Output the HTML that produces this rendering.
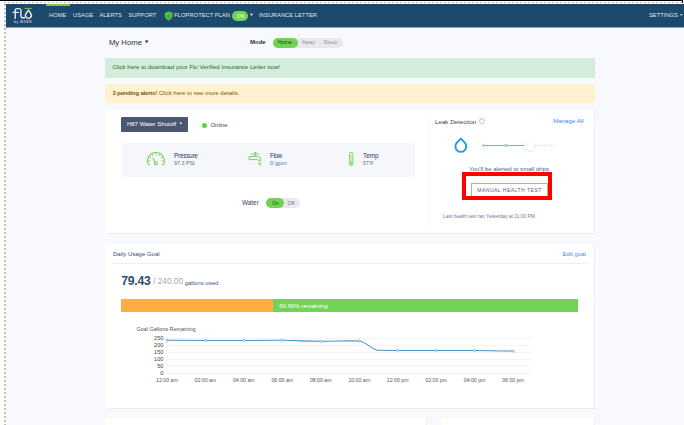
<!DOCTYPE html>
<html><head><meta charset="utf-8">
<style>
*{margin:0;padding:0;box-sizing:border-box}
html,body{width:684px;height:425px;overflow:hidden;background:#fff}
body{position:relative;font-family:"Liberation Sans",sans-serif;color:#333}
.a{position:absolute;white-space:nowrap}
#topblack{left:0;top:0;width:683px;height:1px;background:#000}
#topblack2{left:682px;top:0;width:1px;height:3px;background:#000}
#dotrow{left:4px;top:2px;width:678px;height:1px;background:repeating-linear-gradient(90deg,#bdbdbd 0 2px,transparent 2px 4px)}
#dotcol{left:4px;top:4px;width:2px;height:421px;background:repeating-linear-gradient(180deg,#bdbdbd 0 2px,transparent 2px 4px)}
#page{left:6px;top:4px;width:678px;height:421px;background:#f7f9fc}
#nav{left:6px;top:4px;width:678px;height:23px;background:#1d496d;box-shadow:0 1px 0 #8aa1b4}
.nt{color:#dfe6ee;font-size:5.8px;top:12.4px;line-height:6px}
.card{background:#fff;box-shadow:0.5px 0.6px 1px rgba(40,40,60,0.05)}
.t{line-height:1}
</style></head><body>
<div id="page" class="a"></div>
<div id="topblack" class="a"></div>
<div id="topblack2" class="a"></div>
<div id="dotrow" class="a"></div>
<div id="dotcol" class="a"></div>
<div id="nav" class="a"></div>
<div class="a" style="left:46px;top:4px;width:24px;height:2px;background:#72c94e"></div>
<!-- logo -->
<svg class="a" style="left:10px;top:5px" width="26" height="20" viewBox="0 0 26 20">
 <g fill="none" stroke="#eef2f6" stroke-width="1.35" stroke-linecap="round">
  <path d="M5.2 13.4 V5.6 Q5.2 3.6 7.4 3.6 H9.8"/>
  <path d="M3.2 7.3 H8.4"/>
  <path d="M10.9 4.5 V10.8 Q10.9 12.7 12.8 12.7 H14.6"/>
  <path d="M18.4 5.2 L20.81 8.59 A2.95 2.95 0 1 1 15.99 8.59 Z" stroke-linejoin="round"/>
 </g>
 <rect x="14.6" y="2.9" width="7.1" height="1.1" fill="#6cc04a"/>
 <text x="4" y="18.3" font-size="3" font-weight="bold" fill="#c4ced8" font-family="Liberation Sans" letter-spacing="0.68">by MOEN</text>
</svg>

<div class="a nt" style="left:49px">HOME</div>
<div class="a nt" style="left:73px">USAGE</div>
<div class="a nt" style="left:99.5px">ALERTS</div>
<div class="a nt" style="left:128.4px">SUPPORT</div>
<svg class="a" style="left:164px;top:10.5px" width="9.5" height="10" viewBox="0 0 9.5 10">
 <path d="M4.7 0.4 L8.7 1.8 L8.5 5.6 Q8 8.2 4.7 9.6 Q1.4 8.2 0.9 5.6 L0.7 1.8 Z" fill="#54bf42"/>
 <path d="M4.7 2.6 L3.2 5.2 A1.7 1.7 0 1 0 6.2 5.2 Z" fill="#3f9a33" opacity="0.6"/>
</svg>
<div class="a nt" style="left:174.3px">FLOPROTECT PLAN</div>
<div class="a" style="left:232px;top:11.3px;width:16.2px;height:9.4px;border-radius:5px;background:#6fd452"></div>
<div class="a nt" style="left:236.8px;top:13.2px;font-size:5px;color:#fff">ON</div>
<svg class="a" style="left:0;top:0" width="684" height="425" viewBox="0 0 684 425"><polygon points="249.9,13.7 253.20000000000002,13.7 251.55,15.899999999999999" fill="#e6ecf2"/></svg>
<div class="a nt" style="left:259px">INSURANCE LETTER</div>
<div class="a nt" style="left:649px">SETTINGS</div>
<svg class="a" style="left:0;top:0" width="684" height="425" viewBox="0 0 684 425"><polygon points="679.9,14.2 682.6999999999999,14.2 681.3,15.799999999999999" fill="#e6ecf2"/></svg>

<!-- header row -->
<div class="a t" style="left:108.9px;top:38.7px;font-size:7.75px;color:#2e2e36">My Home</div>
<svg class="a" style="left:0;top:0" width="684" height="425" viewBox="0 0 684 425"><polygon points="144.9,40.6 148.5,40.6 146.70000000000002,43.2" fill="#2e2e36"/></svg>
<div class="a t" style="left:250px;top:39.4px;font-size:6px;font-weight:bold;color:#2c2f3a">Mode</div>
<div class="a" style="left:272.6px;top:38px;width:70.3px;height:9.6px;border-radius:5px;background:#e8e9ec"></div>
<div class="a" style="left:272.6px;top:38px;width:25.6px;height:9.6px;border-radius:5px;background:#6fd452"></div>
<div class="a t" style="left:277.8px;top:40px;font-size:5.3px;color:#1f3b2a">Home</div>
<div class="a t" style="left:302px;top:40px;font-size:5.3px;color:#8e93a0">Away</div>
<div class="a t" style="left:323.6px;top:40px;font-size:5.3px;color:#9a9490">Sleep</div>

<!-- alerts -->
<div class="a" style="left:104.5px;top:57.5px;width:490.5px;height:20.2px;background:#d4eddb;border-radius:2px"></div>
<div class="a t" style="left:112.4px;top:63.9px;font-size:6.1px;color:#2a6b3a">Click here to download your Flo Verified Insurance Letter now!</div>
<div class="a" style="left:104.5px;top:83.5px;width:490.5px;height:19.8px;background:#fff2cf;border-radius:2px"></div>
<div class="a t" style="left:112.4px;top:90px;font-size:6px;color:#735b1a"><b style="letter-spacing:-0.2px">3 pending alerts!</b> Click here to see more details.</div>

<!-- card 1 -->
<div class="a card" style="left:105px;top:110px;width:489px;height:123px"></div>
<div class="a" style="left:121.2px;top:117px;width:66.8px;height:15px;background:#4b5670;border-radius:1px"></div>
<div class="a t" style="left:126.9px;top:121.2px;font-size:6.05px;color:#fff">H87 Water Shutoff</div>
<svg class="a" style="left:0;top:0" width="684" height="425" viewBox="0 0 684 425"><polygon points="179.4,122.4 182.3,122.4 180.85,124.4" fill="#fff"/></svg>
<div class="a" style="left:201.5px;top:123.1px;width:5px;height:5px;border-radius:50%;background:#62cf45"></div>
<div class="a t" style="left:210.5px;top:123px;font-size:5.95px;color:#3a4356">Online</div>

<div class="a" style="left:121.5px;top:142.5px;width:293.5px;height:34.8px;background:#f5f7fb"></div>
<!-- gauge -->
<svg class="a" style="left:144px;top:149px" width="24" height="19" viewBox="144 149 24 19">
 <g fill="none" stroke="#78d25a" stroke-width="1.05" stroke-linecap="round">
  <path d="M149.56 164.45 L148.26 164.45 A8.45 8.45 0 1 1 163.64 164.45 L162.34 164.45"/>
  <path d="M162.05 160.95 L163.55 160.95 M161.23 157.90 L162.53 157.15 M159.00 155.67 L159.75 154.37 M155.95 154.85 L155.95 153.35 M152.90 155.67 L152.15 154.37 M150.67 157.90 L149.37 157.15 M149.85 160.95 L148.35 160.95" stroke-width="0.9"/>
  <path d="M152.9 158.3 L155.2 162"/>
  <circle cx="155.9" cy="163.3" r="1.55"/>
 </g>
</svg>
<div class="a t" style="left:174px;top:152.5px;font-size:6.3px;letter-spacing:-0.2px;color:#223c5e">Pressure</div>
<div class="a t" style="left:174px;top:160.8px;font-size:5.45px;color:#5d6d82">97.3 PSI</div>
<!-- faucet -->
<svg class="a" style="left:246px;top:150px" width="18" height="18" viewBox="246 150 18 18">
 <g fill="none" stroke="#78d25a" stroke-width="1" stroke-linecap="round" stroke-linejoin="round">
  <path d="M251.4 154.2 H258.8 M254.3 152.7 H256.1 M255.2 152.7 V156.6"/>
  <path d="M249.5 156.6 H257.6 Q260.9 156.6 260.9 160 V161 H258.5 V160.3 Q258.5 159.6 257.7 159.6 H249.5 Z"/>
  <circle cx="259.6" cy="163.8" r="1.05"/>
 </g>
</svg>
<div class="a t" style="left:270px;top:152.5px;font-size:6.3px;letter-spacing:-0.4px;color:#223c5e">Flow</div>
<div class="a t" style="left:270px;top:160.4px;font-size:6px;color:#4f79a8">0 gpm</div>
<!-- thermometer -->
<svg class="a" style="left:344px;top:149px" width="16" height="19" viewBox="344 149 16 19">
 <path d="M351.2 154.2 V161.8" stroke="#c2dc6a" stroke-width="1"/>
 <g fill="none" stroke="#78d25a" stroke-width="0.95">
  <path d="M349.5 161.6 V154.1 A1.7 1.7 0 0 1 352.9 154.1 V161.6"/>
  <circle cx="351.2" cy="163.5" r="2.05"/>
 </g>
 <circle cx="351.2" cy="163.5" r="1.1" fill="#6fcd4c"/>
</svg>
<div class="a t" style="left:363px;top:152.5px;font-size:6.3px;color:#223c5e">Temp</div>
<div class="a t" style="left:363px;top:160.6px;font-size:5px;color:#5d6d82">57°F</div>

<div class="a t" style="left:242px;top:200px;font-size:6.4px;color:#2d4766">Water</div>
<div class="a" style="left:265.8px;top:198.2px;width:34.2px;height:9.8px;border-radius:5px;background:#e8e9ec"></div>
<div class="a" style="left:265.8px;top:198.2px;width:18.2px;height:9.8px;border-radius:5px;background:#6fd452"></div>
<div class="a t" style="left:272px;top:200.5px;font-size:5.2px;color:#1f3b2a">On</div>
<div class="a t" style="left:287.5px;top:200.5px;font-size:5.2px;color:#6c707a">Off</div>

<div class="a" style="left:428px;top:117px;width:1px;height:108.5px;background:#f4f5f8"></div>

<div class="a t" style="left:435px;top:118.7px;font-size:6.2px;color:#3a3f56">Leak Detection</div>
<div class="a" style="left:479px;top:118.4px;width:5.6px;height:5.6px;border-radius:50%;border:0.6px solid #c3c7cf;font-size:4px;color:#bbb;text-align:center;line-height:4.6px">?</div>
<div class="a t" style="left:553px;top:118.4px;font-size:6.2px;color:#478bf0">Manage All</div>
<svg class="a" style="left:453px;top:136px" width="16" height="18" viewBox="0 0 16 18">
 <path d="M7.85 2.7 L11.77 6.67 A5.45 5.45 0 1 1 3.93 6.67 Z" fill="none" stroke="#1e9be6" stroke-width="1.9" stroke-linejoin="round"/>
</svg>
<div class="a" style="left:483.7px;top:144.5px;width:41px;height:1.4px;background:#6cd24a"></div>
<div class="a" style="left:524.5px;top:144.6px;width:26.5px;height:1.2px;background:#e9eaec"></div>
<div class="a" style="left:482px;top:143.5px;width:3.4px;height:3.4px;border-radius:50%;border:0.8px solid #70d24f;background:#fff"></div>
<div class="a" style="left:504.2px;top:143.5px;width:3.4px;height:3.4px;border-radius:50%;border:0.8px solid #70d24f;background:#fff"></div>
<div class="a" style="left:549.3px;top:143.5px;width:3.4px;height:3.4px;border-radius:50%;border:0.8px solid #e6e7ea;background:#fff"></div>
<div class="a" style="left:523.8px;top:139.6px;width:11px;height:11px;border-radius:50%;background:#fff;box-shadow:0 0.4px 1.4px rgba(0,0,0,0.22)"></div>

<div class="a t" style="left:469.1px;top:166.2px;font-size:6.05px;color:#48628c">You'll be alerted to small drips</div>
<div class="a" style="left:471.4px;top:182.8px;width:77px;height:14px;border:0.8px solid #86d56c;background:#fff"></div>
<div class="a t" style="left:477.3px;top:187.9px;font-size:5px;color:#4f5f7a;letter-spacing:0.5px">MANUAL HEALTH TEST</div>
<div class="a" style="left:461.9px;top:172px;width:90.6px;height:27.6px;border:4.2px solid #fe0000"></div>
<div class="a t" style="left:443px;top:215.3px;font-size:4.9px;color:#6b7994">Last health test ran Yesterday at 11:00 PM</div>

<!-- card 2 -->
<div class="a card" style="left:105px;top:243.6px;width:489px;height:164.4px"></div>
<div class="a t" style="left:112.9px;top:250.7px;font-size:6.0px;color:#34507a">Daily Usage Goal</div>
<div class="a t" style="left:562.6px;top:250.7px;font-size:6.0px;color:#3f87ee">Edit goal</div>
<div class="a" style="left:112.9px;top:263.2px;width:473px;height:1px;background:#eceef2"></div>
<div class="a t" style="left:121.2px;top:275.3px;font-size:12.2px;font-weight:bold;color:#2f4c6e;letter-spacing:-0.25px">79.43</div>
<div class="a t" style="left:153.2px;top:278.2px;font-size:8.25px;color:#a3a8b2">/ 240.00</div>
<div class="a t" style="left:184.7px;top:279.8px;font-size:6px;color:#3e5a80">gallons used</div>

<div class="a" style="left:121.2px;top:299.4px;width:456.4px;height:12.3px;background:#73d356"></div>
<div class="a" style="left:121.2px;top:299.4px;width:151.4px;height:12.3px;background:#fead42"></div>
<div class="a t" style="left:279.3px;top:302.5px;font-size:6px;color:#fff">66.90% remaining</div>

<div class="a t" style="left:136.6px;top:327px;font-size:5.45px;color:#555">Goal Gallons Remaining</div>
<svg class="a" style="left:130px;top:332px" width="410" height="56" viewBox="130 332 410 56">
 <g stroke="#e8e8e8" stroke-width="0.6">
  <line x1="166.9" y1="338.3" x2="531.5" y2="338.3"/>
  <line x1="166.9" y1="345.3" x2="531.5" y2="345.3"/>
  <line x1="166.9" y1="352.3" x2="531.5" y2="352.3"/>
  <line x1="166.9" y1="359.3" x2="531.5" y2="359.3"/>
  <line x1="166.9" y1="366.3" x2="531.5" y2="366.3"/>
  <line x1="166.9" y1="373.5" x2="531.5" y2="373.5"/>
  <line x1="166.9" y1="336" x2="166.9" y2="374"/>
 </g>
 <g font-family="Liberation Sans" font-size="5.6" fill="#444" text-anchor="end">
  <text x="163.4" y="340.05">250</text>
  <text x="163.4" y="347.05">200</text>
  <text x="163.4" y="354.05">150</text>
  <text x="163.4" y="361.05">100</text>
  <text x="163.4" y="368.05">50</text>
  <text x="163.4" y="375.25">0</text>
 </g>
 <g font-family="Liberation Sans" font-size="5.2" fill="#555" text-anchor="middle">
  <text x="166.90" y="381.9">12:00 am</text>
  <text x="205.36" y="381.9">02:00 am</text>
  <text x="243.82" y="381.9">04:00 am</text>
  <text x="282.28" y="381.9">06:00 am</text>
  <text x="320.74" y="381.9">08:00 am</text>
  <text x="359.20" y="381.9">10:00 am</text>
  <text x="397.66" y="381.9">12:00 pm</text>
  <text x="436.12" y="381.9">02:00 pm</text>
  <text x="474.58" y="381.9">04:00 pm</text>
  <text x="513.04" y="381.9">06:00 pm</text>
 </g>
 <path d="M166.90 340.3 L205.36 340.5 L243.82 340.5 L282.28 340.3 C300.28 340.6 305.74 341.3 320.74 341.3 C335.74 341.3 345.20 340.6 359.20 341.0 C367.20 342.2 372.20 350.4 378.20 350.29999999999995 L397.66 350.4 L436.12 350.4 L474.58 350.5 C490.58 350.7 501.04 350.90000000000003 513.04 351.1" fill="none" stroke="#4b93c6" stroke-width="1.05"/>
 <g fill="#fff" stroke="#4c93c8" stroke-width="0.6">
  <circle cx="166.90" cy="340.3" r="1.1"/>
  <circle cx="205.36" cy="340.5" r="1.1"/>
  <circle cx="243.82" cy="340.5" r="1.1"/>
  <circle cx="282.28" cy="340.3" r="1.1"/>
  <circle cx="320.74" cy="341.3" r="1.1"/>
  <circle cx="359.20" cy="341.0" r="1.1"/>
  <circle cx="397.66" cy="350.4" r="1.1"/>
  <circle cx="436.12" cy="350.4" r="1.1"/>
  <circle cx="474.58" cy="350.5" r="1.1"/>
  <circle cx="513.04" cy="351.1" r="1.1"/>
 </g>
</svg>

<!-- card 3 -->
<div class="a card" style="left:105px;top:418.2px;width:321px;height:20px"></div>
<div class="a card" style="left:440.7px;top:418.2px;width:153.3px;height:20px"></div>
</body></html>
